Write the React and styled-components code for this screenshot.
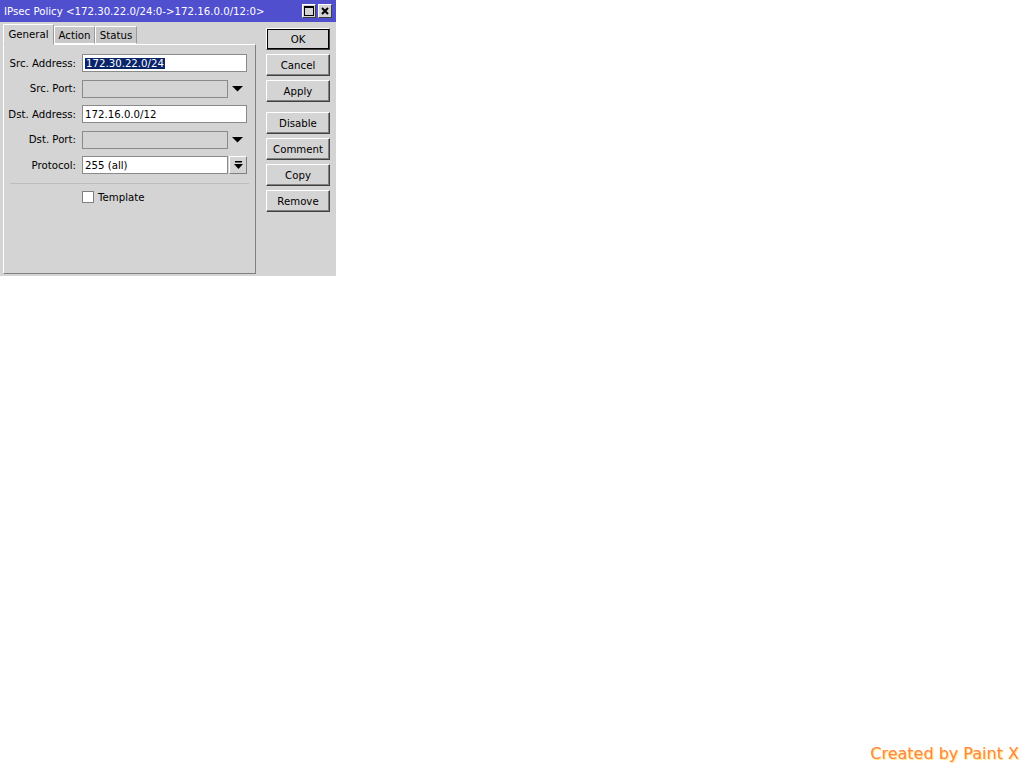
import React from "react";
import styled, { createGlobalStyle } from "styled-components";

const GlobalStyle = createGlobalStyle`
  html, body {
    margin: 0;
    padding: 0;
    background: #ffffff;
  }
  body {
    font-family: "DejaVu Sans", "Liberation Sans", sans-serif;
    font-size: 10.2px;
  }
`;

const Page = styled.div`
  display: flex;
  flex-direction: column;
  justify-content: space-between;
  height: 768px;
`;

const Window = styled.div`
  width: 336px;
  height: 276px;
  background: #d4d4d4;
  display: flex;
  flex-direction: column;
`;

const TitleBar = styled.div`
  height: 22px;
  background: #5050cf;
  color: #ffffff;
  display: flex;
  align-items: center;
  justify-content: space-between;
  padding: 0 4px 0 4px;
  font-size: 10.2px;
`;

const TitleButtons = styled.div`
  display: flex;
  gap: 2px;
`;

const TitleButton = styled.div`
  width: 14px;
  height: 14px;
  background: #d4d4d4;
  border: 1px solid;
  border-color: #ffffff #404040 #404040 #ffffff;
  display: flex;
  align-items: center;
  justify-content: center;
  box-sizing: border-box;
`;

const Body = styled.div`
  flex: 1;
  display: flex;
  padding: 2px 6px 2px 3px;
  gap: 10px;
`;

const Left = styled.div`
  width: 253px;
  display: flex;
  flex-direction: column;
`;

const Tabs = styled.div`
  display: flex;
  align-items: flex-end;
  height: 20px;
  position: relative;
  z-index: 1;
`;

const Tab = styled.div`
  box-sizing: border-box;
  width: ${(p) => p.$width}px;
  height: ${(p) => (p.$active ? "21px" : "18px")};
  background: ${(p) => (p.$active ? "#d4d4d4" : "#c8c8c8")};
  border: 1px solid;
  border-color: #ffffff #9a9a9a ${(p) => (p.$active ? "#d4d4d4" : "#ffffff")} #ffffff;
  margin-bottom: ${(p) => (p.$active ? "-1px" : "0")};
  display: flex;
  align-items: center;
  justify-content: center;
  color: #000;
`;

const Panel = styled.div`
  flex: 1;
  border: 1px solid;
  border-color: #ffffff #808080 #808080 #ffffff;
  padding: 9px 0 0 0;
  display: flex;
  flex-direction: column;
`;

const Row = styled.div`
  display: flex;
  align-items: center;
  gap: 6px;
  height: 18px;
  margin-bottom: ${(p) => p.$gap || "7.5px"};
`;

const Label = styled.div`
  width: 72px;
  text-align: right;
  white-space: nowrap;
  color: #000;
`;

const Field = styled.div`
  width: 165px;
  display: flex;
  align-items: center;
  gap: ${(p) => p.$gap || "0"};
`;

const Input = styled.div`
  flex: 1;
  box-sizing: border-box;
  height: 18px;
  border: 1px solid #8a8a8a;
  background: ${(p) => (p.$disabled ? "#d4d4d4" : "#ffffff")};
  padding: 0 2px;
  display: flex;
  align-items: center;
  color: #000;
`;

const Selected = styled.span`
  background: #0a246a;
  color: #ffffff;
  padding: 0 1px;
`;

const ArrowCell = styled.div`
  width: ${(p) => (p.$boxed ? "18px" : "19px")};
  height: 18px;
  display: flex;
  align-items: center;
  justify-content: center;
  box-sizing: border-box;
  ${(p) =>
    p.$boxed &&
    `border: 1px solid; border-color: #ffffff #808080 #808080 #ffffff; background: #d4d4d4;`}
`;

const Separator = styled.div`
  height: 0;
  border-top: 1px solid #bdbdbd;
  margin: 1px 6px 7px 6px;
`;

const CheckRow = styled.label`
  display: flex;
  align-items: center;
  gap: 4px;
  padding-left: 78px;
  color: #000;
`;

const CheckBox = styled.span`
  width: 12px;
  height: 12px;
  box-sizing: border-box;
  border: 1px solid #808080;
  background: #ffffff;
`;

const Buttons = styled.div`
  display: flex;
  flex-direction: column;
  padding-top: 4px;
  gap: 4px;
`;

const Button = styled.div`
  box-sizing: border-box;
  width: 64px;
  height: 22px;
  background: #d4d4d4;
  border: 1px solid;
  border-color: #ffffff #404040 #404040 #ffffff;
  box-shadow: ${(p) => (p.$default ? "0 0 0 1px #000 inset" : "inset -1px -1px 0 #808080")};
  display: flex;
  align-items: center;
  justify-content: center;
  color: #000;
  margin-top: ${(p) => (p.$spaced ? "6px" : "0")};
`;

const Footer = styled.div`
  align-self: flex-end;
  padding: 0 5px 5px 0;
  font-family: "DejaVu Sans", Verdana, sans-serif;
  font-size: 16px;
  color: #ff8548;
  text-shadow: 1px 1px 1px #ffe070;
`;

const DownArrow = () => (
  <svg width="11" height="7" viewBox="0 0 11 7">
    <polygon points="0,1 11,1 5.5,6.5" fill="#000" />
  </svg>
);

const DropArrow = () => (
  <svg width="9" height="9" viewBox="0 0 9 9">
    <rect x="1" y="0" width="7" height="1.5" fill="#000" />
    <polygon points="0,3 9,3 4.5,8" fill="#000" />
  </svg>
);

export default function App() {
  return (
    <Page>
      <GlobalStyle />
      <Window>
        <TitleBar>
          <span>IPsec Policy &lt;172.30.22.0/24:0-&gt;172.16.0.0/12:0&gt;</span>
          <TitleButtons>
            <TitleButton>
              <svg width="10" height="10" viewBox="0 0 10 10">
                <rect x="0.5" y="0.5" width="9" height="9" fill="none" stroke="#000" />
                <rect x="0" y="0" width="10" height="2" fill="#000" />
              </svg>
            </TitleButton>
            <TitleButton>
              <svg width="8" height="8" viewBox="0 0 8 8">
                <path d="M1 1 L7 7 M7 1 L1 7" stroke="#000" strokeWidth="2" />
              </svg>
            </TitleButton>
          </TitleButtons>
        </TitleBar>
        <Body>
          <Left>
            <Tabs>
              <Tab $active $width={51}>General</Tab>
              <Tab $width={41}>Action</Tab>
              <Tab $width={42}>Status</Tab>
            </Tabs>
            <Panel>
              <Row>
                <Label>Src. Address:</Label>
                <Field>
                  <Input>
                    <Selected>172.30.22.0/24</Selected>
                  </Input>
                </Field>
              </Row>
              <Row>
                <Label>Src. Port:</Label>
                <Field>
                  <Input $disabled />
                  <ArrowCell>
                    <DownArrow />
                  </ArrowCell>
                </Field>
              </Row>
              <Row>
                <Label>Dst. Address:</Label>
                <Field>
                  <Input>172.16.0.0/12</Input>
                </Field>
              </Row>
              <Row>
                <Label>Dst. Port:</Label>
                <Field>
                  <Input $disabled />
                  <ArrowCell>
                    <DownArrow />
                  </ArrowCell>
                </Field>
              </Row>
              <Row $gap="8px">
                <Label>Protocol:</Label>
                <Field $gap="1px">
                  <Input>255 (all)</Input>
                  <ArrowCell $boxed>
                    <DropArrow />
                  </ArrowCell>
                </Field>
              </Row>
              <Separator />
              <CheckRow>
                <CheckBox />
                Template
              </CheckRow>
            </Panel>
          </Left>
          <Buttons>
            <Button $default>OK</Button>
            <Button>Cancel</Button>
            <Button>Apply</Button>
            <Button $spaced>Disable</Button>
            <Button>Comment</Button>
            <Button>Copy</Button>
            <Button>Remove</Button>
          </Buttons>
        </Body>
      </Window>
      <Footer>Created by Paint X</Footer>
    </Page>
  );
}
